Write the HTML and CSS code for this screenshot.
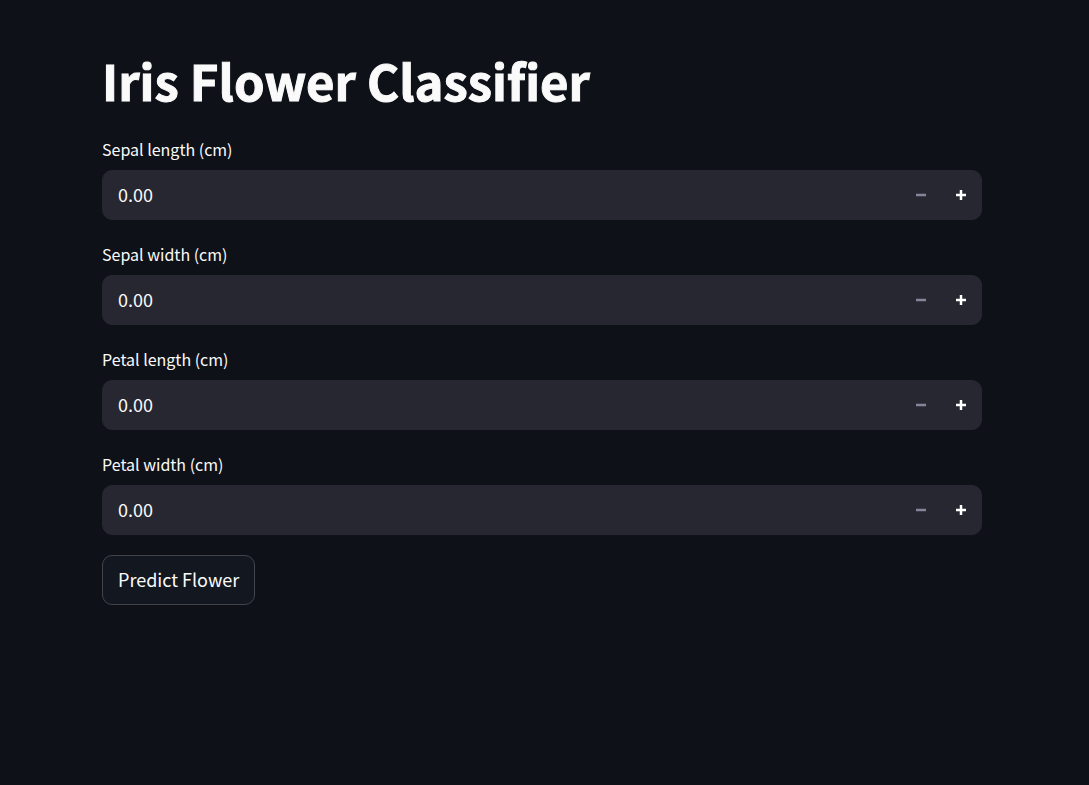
FILE: index.html
```html
<!DOCTYPE html>
<html lang="en">
<head>
<meta charset="utf-8">
<meta name="viewport" content="width=device-width, initial-scale=1">
<title>Iris Flower Classifier</title>
<link rel="stylesheet" href="styles.css">
</head>
<body>
<main class="page">
  <h1 class="title">Iris Flower Classifier</h1>
  <form class="form">
    <div class="field">
      <label class="label" for="sepal-length">Sepal length (cm)</label>
      <div class="control">
        <input class="input" id="sepal-length" type="text" inputmode="decimal" value="0.00">
        <button class="step" type="button" aria-label="Decrease sepal length" disabled><svg class="icon" viewBox="0 0 10 10"><path d="M0 5h10"/></svg></button>
        <button class="step" type="button" aria-label="Increase sepal length"><svg class="icon" viewBox="0 0 10 10"><path d="M0 5h10M5 0v10"/></svg></button>
      </div>
    </div>
    <div class="field">
      <label class="label" for="sepal-width">Sepal width (cm)</label>
      <div class="control">
        <input class="input" id="sepal-width" type="text" inputmode="decimal" value="0.00">
        <button class="step" type="button" aria-label="Decrease sepal width" disabled><svg class="icon" viewBox="0 0 10 10"><path d="M0 5h10"/></svg></button>
        <button class="step" type="button" aria-label="Increase sepal width"><svg class="icon" viewBox="0 0 10 10"><path d="M0 5h10M5 0v10"/></svg></button>
      </div>
    </div>
    <div class="field">
      <label class="label" for="petal-length">Petal length (cm)</label>
      <div class="control">
        <input class="input" id="petal-length" type="text" inputmode="decimal" value="0.00">
        <button class="step" type="button" aria-label="Decrease petal length" disabled><svg class="icon" viewBox="0 0 10 10"><path d="M0 5h10"/></svg></button>
        <button class="step" type="button" aria-label="Increase petal length"><svg class="icon" viewBox="0 0 10 10"><path d="M0 5h10M5 0v10"/></svg></button>
      </div>
    </div>
    <div class="field">
      <label class="label" for="petal-width">Petal width (cm)</label>
      <div class="control">
        <input class="input" id="petal-width" type="text" inputmode="decimal" value="0.00">
        <button class="step" type="button" aria-label="Decrease petal width" disabled><svg class="icon" viewBox="0 0 10 10"><path d="M0 5h10"/></svg></button>
        <button class="step" type="button" aria-label="Increase petal width"><svg class="icon" viewBox="0 0 10 10"><path d="M0 5h10M5 0v10"/></svg></button>
      </div>
    </div>
    <button class="submit" type="button">Predict Flower</button>
  </form>
</main>
</body>
</html>
```
FILE: styles.css
```css
* {
  box-sizing: border-box;
}

body {
  margin: 0;
  min-height: 100vh;
  background: #0e1117;
  color: #fafafa;
  font-family: "Noto Sans CJK SC", "Open Sans", sans-serif;
}

.page {
  padding: 48px 107px 48px 102px;
}

.title {
  margin: 0 0 23px;
  font-size: 49px;
  font-weight: 700;
  line-height: 64px;
  -webkit-text-stroke: 1px currentColor;
}

.form {
  display: flex;
  flex-direction: column;
  align-items: flex-start;
  gap: 20px;
}

.field {
  width: 100%;
}

.label {
  display: block;
  margin-bottom: 7px;
  font-size: 16px;
  line-height: 28px;
}

.control {
  display: flex;
  align-items: stretch;
  height: 50px;
  overflow: hidden;
  border: 1px solid #262730;
  border-radius: 10px;
  background: #262730;
}

.input {
  flex: 1;
  min-width: 0;
  padding: 0 15px 2px;
  border: 0;
  background: transparent;
  color: inherit;
  font: inherit;
  font-size: 18px;
}

.step {
  display: flex;
  align-items: center;
  justify-content: center;
  width: 40px;
  padding: 0;
  border: 0;
  background: transparent;
  color: #ffffff;
}

.step:disabled {
  color: #84849a;
}

.icon {
  width: 10px;
  height: 10px;
  fill: none;
  stroke: currentColor;
  stroke-width: 2.5;
}

.submit {
  height: 50px;
  padding: 0 15px 2px;
  border: 1px solid #41444c;
  border-radius: 10px;
  background: #131720;
  color: inherit;
  font: inherit;
  font-size: 18px;
}
```
